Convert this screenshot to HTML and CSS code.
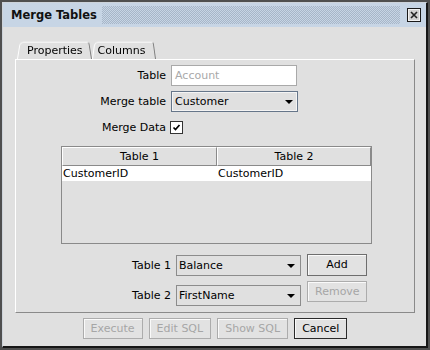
FILE: index.html
```html
<!DOCTYPE html>
<html>
<head>
<meta charset="utf-8">
<link rel="stylesheet" href="styles.css">
</head>
<body>
<div class="window">
  <div class="frame">
    <div class="titlebar">
      <span class="title">Merge Tables</span>
      <span class="dots"></span>
      <span class="close">
        <svg width="14" height="14" viewBox="0 0 14 14">
          <rect x="0.5" y="0.5" width="13" height="13" fill="#d2d2d2" stroke="#1a1a1a"/>
          <rect x="1.5" y="1.5" width="11" height="11" fill="none" stroke="#f2f2f2"/>
          <path d="M4 4 L10 10 M10 4 L4 10" stroke="#222" stroke-width="1.6"/>
        </svg>
      </span>
    </div>
    <div class="content">
      <div class="tabs">
        <div class="tab active">Properties</div>
        <div class="tab">Columns</div>
      </div>
      <div class="panel">
        <div class="form">
          <label>Table</label>
          <div class="input">Account</div>
          <label>Merge table</label>
          <div class="select focus"><span>Customer</span><span class="arrow"></span></div>
          <label>Merge Data</label>
          <div class="check">
            <svg width="11" height="11" viewBox="0 0 11 11"><path d="M2.5 5.5 L4.5 7.5 L8.5 3" fill="none" stroke="#000" stroke-width="1.7"/></svg>
          </div>
        </div>
        <div class="grid">
          <div class="grid-head"><div>Table 1</div><div>Table 2</div></div>
          <div class="grid-row"><div>CustomerID</div><div>CustomerID</div></div>
        </div>
        <div class="pairs">
          <div class="pair-fields">
            <label>Table 1</label>
            <div class="select wide"><span>Balance</span><span class="arrow"></span></div>
            <label>Table 2</label>
            <div class="select wide"><span>FirstName</span><span class="arrow"></span></div>
          </div>
          <div class="pair-buttons">
            <div class="btn add">Add</div>
            <div class="btn disabled">Remove</div>
          </div>
        </div>
      </div>
      <div class="footer">
        <div class="btn disabled">Execute</div>
        <div class="btn disabled">Edit SQL</div>
        <div class="btn disabled">Show SQL</div>
        <div class="btn default">Cancel</div>
      </div>
    </div>
  </div>
</div>
</body>
</html>
```

FILE: styles.css
```css
* { box-sizing: border-box; }
html, body { margin: 0; padding: 0; }
body {
  width: 430px;
  height: 350px;
  font-family: "DejaVu Sans", Verdana, sans-serif;
  font-size: 11px;
  color: #000;
  background: #4a4a4a;
  overflow: hidden;
}
.window {
  width: 430px;
  height: 350px;
  border: 2px solid #4f4f4f;
}
.frame {
  height: 100%;
  border-top: 1px solid #cdd3da;
  border-left: 1px solid #cdd3da;
  border-right: 2px solid #161616;
  border-bottom: 2px solid #161616;
  background: #e0e0e0;
  display: flex;
  flex-direction: column;
}
.titlebar {
  height: 24px;
  flex: none;
  display: flex;
  align-items: center;
  background: #c7d5e5;
  padding: 0 5px 0 8px;
}
.title {
  font-weight: bold;
  font-size: 11.5px;
  color: #111;
}
.dots {
  flex: 1;
  height: 18px;
  margin: 0 7px 0 5px;
  background: repeating-conic-gradient(#a7b6c8 0 25%, transparent 0 50%) 0 0 / 2px 2px;
}
.close { display: flex; }
.content {
  flex: 1;
  padding: 14px 11px 0 12px;
  display: flex;
  flex-direction: column;
}
.tabs {
  display: flex;
  height: 18px;
  padding-left: 2px;
}
.tab {
  position: relative;
  z-index: 0;
  height: 18px;
  line-height: 19px;
  padding: 0 9px 0 10px;
}
.tab + .tab { padding: 0 10px 0 6px; }
.tab::before {
  content: "";
  position: absolute;
  inset: -1px 0 0 0;
  z-index: -1;
  background: #e0e0e0;
  border: 1px solid #fff;
  border-right-color: #7d7d7d;
  border-bottom: none;
  border-radius: 5px 3px 0 0;
  transform: perspective(40px) rotateX(10deg);
  transform-origin: bottom;
}
.panel {
  height: 254px;
  border: 1px solid;
  border-color: #fff #8a8a8a #8a8a8a #fff;
  padding-top: 5px;
}
.form {
  display: grid;
  grid-template-columns: 150px auto;
  grid-auto-rows: 21px;
  column-gap: 5px;
  row-gap: 5px;
  align-items: center;
  justify-items: start;
}
.form label, .pair-fields label { justify-self: end; }
.input {
  width: 126px;
  height: 21px;
  background: #fff;
  border: 1px solid #a9a9a9;
  color: #a9a9a9;
  padding-left: 3px;
  line-height: 19px;
}
.select {
  display: flex;
  align-items: center;
  justify-content: space-between;
  height: 21px;
  border: 1px solid #8c8c8c;
  background: #e0e0e0;
  padding: 0 5px 0 2px;
}
.select.focus {
  width: 127px;
  border-color: #66768a;
  box-shadow: inset 0 0 0 1px #f4f4f4;
  padding: 0 4px 0 3px;
}
.select.wide { width: 125px; }
.arrow {
  width: 0;
  height: 0;
  border-left: 4px solid transparent;
  border-right: 4px solid transparent;
  border-top: 4px solid #000;
}
.check {
  width: 13px;
  height: 13px;
  border: 1px solid #333;
  background: #fff;
  display: flex;
  align-items: center;
  justify-content: center;
  margin-left: -1px;
}
.grid {
  margin: 8px 0 0 45px;
  width: 311px;
  height: 98px;
  border: 1px solid #8a8a8a;
  background: #e0e0e0;
}
.grid-head, .grid-row {
  display: grid;
  grid-template-columns: 155px 1fr;
}
.grid-head { height: 19px; }
.grid-head div {
  border-left: 1px solid #fff;
  border-top: 1px solid #fff;
  border-right: 1px solid #8a8a8a;
  border-bottom: 1px solid #8a8a8a;
  text-align: center;
  line-height: 17px;
}
.grid-row {
  height: 15px;
  line-height: 15px;
  background: #fff;
}
.grid-row div { padding-left: 1px; }
.pairs {
  display: flex;
  gap: 6px;
  margin-top: 10px;
}
.pair-fields {
  display: grid;
  grid-template-columns: 155px 125px;
  grid-auto-rows: 21px;
  column-gap: 5px;
  row-gap: 9px;
  align-items: center;
  padding-top: 1px;
}
.pair-buttons {
  display: flex;
  flex-direction: column;
  gap: 5px;
}
.btn {
  height: 21px;
  line-height: 19px;
  border: 1px solid #6e6e6e;
  background: #e2e2e2;
  box-shadow: inset 1px 1px 0 #fafafa;
  padding: 0 7px;
  text-align: center;
  white-space: nowrap;
}
.pair-buttons .btn { width: 60px; }
.btn.add { height: 22px; line-height: 20px; }
.btn.disabled {
  color: #a6a6a6;
  border-color: #acacac;
}
.btn.default { border-color: #2a2a2a; }
.footer {
  display: flex;
  justify-content: center;
  gap: 6px;
  margin-top: 5px;
}
```
